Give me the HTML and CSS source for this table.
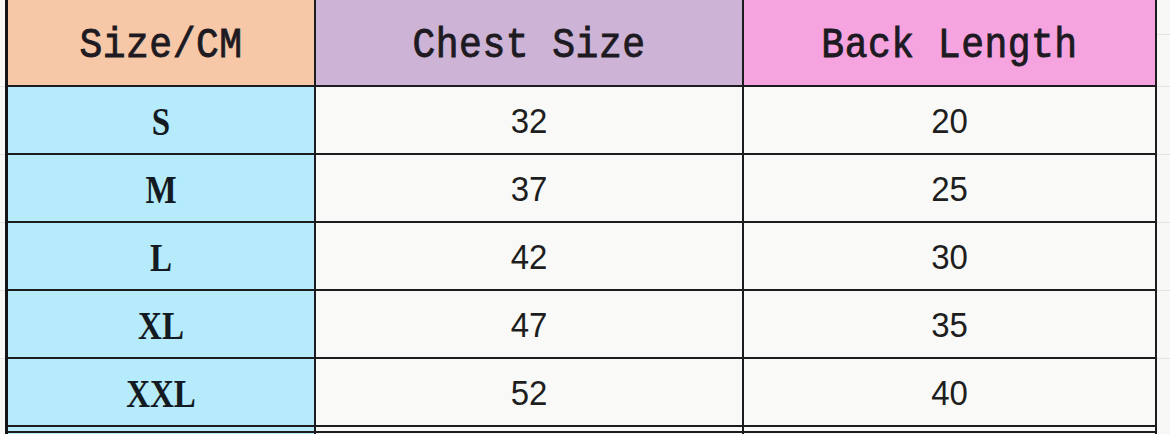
FILE: index.html
```html
<!DOCTYPE html>
<html>
<head>
<meta charset="utf-8">
<link rel="stylesheet" href="styles.css">
</head>
<body>
<div class="page">
  <div class="gutter gutter-left"></div>
  <div class="chart">
    <div class="cell head h1"><span class="mono">Size/CM</span></div>
    <div class="cell head h2"><span class="mono">Chest Size</span></div>
    <div class="cell head h3"><span class="mono">Back Length</span></div>

    <div class="cell size"><span class="serif">S</span></div>
    <div class="cell val"><span class="sans">32</span></div>
    <div class="cell val"><span class="sans">20</span></div>

    <div class="cell size"><span class="serif">M</span></div>
    <div class="cell val"><span class="sans">37</span></div>
    <div class="cell val"><span class="sans">25</span></div>

    <div class="cell size"><span class="serif">L</span></div>
    <div class="cell val"><span class="sans">42</span></div>
    <div class="cell val"><span class="sans">30</span></div>

    <div class="cell size"><span class="serif">XL</span></div>
    <div class="cell val"><span class="sans">47</span></div>
    <div class="cell val"><span class="sans">35</span></div>

    <div class="cell size"><span class="serif">XXL</span></div>
    <div class="cell val"><span class="sans">52</span></div>
    <div class="cell val"><span class="sans">40</span></div>

    <div class="cell size"></div>
    <div class="cell val"></div>
    <div class="cell val"></div>

    <div class="cell size"></div>
    <div class="cell val"></div>
    <div class="cell val"></div>
  </div>
  <div class="gutter gutter-right"></div>
</div>
</body>
</html>
```

FILE: styles.css
```css
html, body {
  margin: 0;
  padding: 0;
  background: #f8f9f7;
  height: 434px;
  overflow: hidden;
}

.page {
  display: flex;
  height: 434px;
  overflow: hidden;
}

.gutter {
  height: 434px;
  background:
    linear-gradient(#e2e4e2, #e2e4e2) 0 86px / 100% 1px no-repeat,
    linear-gradient(#e2e4e2, #e2e4e2) 0 154px / 100% 1px no-repeat,
    linear-gradient(#e2e4e2, #e2e4e2) 0 222px / 100% 1px no-repeat,
    linear-gradient(#e2e4e2, #e2e4e2) 0 290px / 100% 1px no-repeat,
    linear-gradient(#e2e4e2, #e2e4e2) 0 358px / 100% 1px no-repeat,
    #f8f9f7;
}

.gutter-left {
  width: 5px;
  flex: none;
}

.gutter-right {
  flex: 1;
  background:
    linear-gradient(#e2e4e2, #e2e4e2) 0 34px / 100% 1px no-repeat,
    linear-gradient(#e2e4e2, #e2e4e2) 0 86px / 100% 1px no-repeat,
    linear-gradient(#e2e4e2, #e2e4e2) 0 154px / 100% 1px no-repeat,
    linear-gradient(#e2e4e2, #e2e4e2) 0 222px / 100% 1px no-repeat,
    linear-gradient(#e2e4e2, #e2e4e2) 0 290px / 100% 1px no-repeat,
    linear-gradient(#e2e4e2, #e2e4e2) 0 358px / 100% 1px no-repeat,
    #f8f9f7;
}

.chart {
  flex: none;
  display: grid;
  grid-template-columns: 306px 426px 411px;
  grid-template-rows: 85px 66px 66px 66px 66px 66px 4px 40px;
  column-gap: 2px;
  row-gap: 2px;
  background: #1c1c1e;
  border-left: 3px solid #141416;
  border-right: 2px solid #1c1c1e;
  height: 434px;
  overflow: hidden;
}

.cell {
  display: flex;
  align-items: center;
  justify-content: center;
  overflow: hidden;
}

.h1 { background: #f6c8a8; }
.h2 { background: #cdb3d5; }
.h3 { background: #f6a4e0; }

.size { background: #b5ebfa; }
.val { background: #f9faf7; }

.head {
  padding-top: 6px;
}

.mono {
  display: inline-block;
  font-family: "Liberation Mono", "Courier New", monospace;
  font-weight: normal;
  font-size: 38px;
  color: #1d1a22;
  -webkit-text-stroke: 0.8px #1d1a22;
  transform: scaleY(1.1);
  letter-spacing: 0.5px;
}

.serif {
  display: inline-block;
  font-family: "Liberation Serif", "Times New Roman", serif;
  font-weight: bold;
  font-size: 33px;
  color: #141a22;
  transform: scaleY(1.2);
  margin-top: 5px;
}

.sans {
  display: inline-block;
  font-family: "Liberation Sans", Arial, sans-serif;
  font-size: 33px;
  color: #1e1e1e;
  transform: scaleY(1.06);
  margin-top: 2px;
}
```
